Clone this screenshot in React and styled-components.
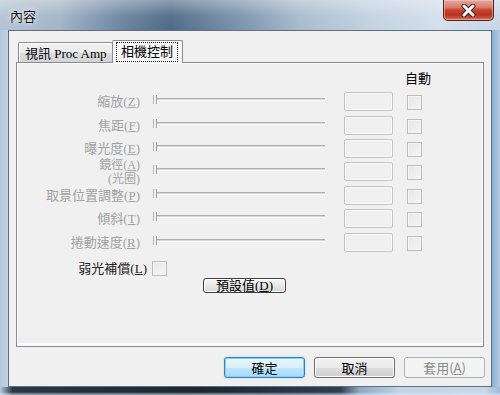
import React from 'react'
import styled, { createGlobalStyle } from 'styled-components'

const GlobalStyle = createGlobalStyle`
  html, body { margin: 0; padding: 0; background: #fff; }
  body {
    font-family: "Liberation Serif", "Noto Sans CJK TC", serif;
    font-size: 13px;
    color: #000;
  }
  * { box-sizing: border-box; }
`

const rows = [
  { label: '縮放', key: 'Z' },
  { label: '焦距', key: 'F' },
  { label: '曝光度', key: 'E' },
  { label: '鏡徑', key: 'A', extra: '(光圈)' },
  { label: '取景位置調整', key: 'P' },
  { label: '傾斜', key: 'T' },
  { label: '捲動速度', key: 'R' },
]

function App() {
  return (
    <>
      <GlobalStyle />
      <Window>
        <TitleBar>
          <Title>內容</Title>
          <CloseBtn>
            <svg width="15" height="13" viewBox="0 0 15 13">
              <path d="M3 2 L12 11 M12 2 L3 11" stroke="#3a2020" strokeWidth="5" strokeLinecap="round" />
              <path d="M3 2 L12 11 M12 2 L3 11" stroke="#fff" strokeWidth="3" strokeLinecap="round" />
            </svg>
          </CloseBtn>
        </TitleBar>
        <Client>
          <TabArea>
            <TabStrip>
              <Tab>視訊 Proc Amp</Tab>
              <Tab $active>
                <Focus>相機控制</Focus>
              </Tab>
            </TabStrip>
            <Panel>
              <HeaderRow>自動</HeaderRow>
              {rows.map((r) => (
                <Row key={r.key}>
                  <Label $twoLine={!!r.extra}>
                    <LabelLine>
                      {r.label}(<u>{r.key}</u>)
                    </LabelLine>
                    {r.extra && <LabelLine>{r.extra}</LabelLine>}
                  </Label>
                  <Slider>
                    <Thumb />
                    <Track />
                  </Slider>
                  <ValueBox />
                  <Check />
                </Row>
              ))}
              <LowRow>
                <LowLabel>
                  弱光補償(<u>L</u>)
                </LowLabel>
                <LowCheck />
              </LowRow>
              <DefaultRow>
                <OldButton>
                  預設值(<u>D</u>)
                </OldButton>
              </DefaultRow>
            </Panel>
          </TabArea>
          <ButtonRow>
            <Button $variant="default">確定</Button>
            <Button>取消</Button>
            <Button $variant="disabled">
              套用(<u>A</u>)
            </Button>
          </ButtonRow>
        </Client>
        <BottomEdge />
      </Window>
    </>
  )
}

export default App

const Window = styled.div`
  width: 500px;
  height: 395px;
  display: flex;
  flex-direction: column;
  overflow: hidden;
  background: linear-gradient(90deg, #b3c7dc 0%, #c4d5e6 2%, #c9d8e8 96%, #8fb0d6 98.5%, #b6cbe0 100%);
`

const TitleBar = styled.div`
  height: 30px;
  display: flex;
  justify-content: space-between;
  align-items: flex-start;
  padding: 0 6px 0 10px;
  background:
    linear-gradient(180deg, rgba(255, 255, 255, 0.35) 0px, rgba(255, 255, 255, 0.05) 16px, rgba(255, 255, 255, 0) 30px),
    linear-gradient(90deg, #b4c4d4 0%, #a2b4c6 12%, #6d86a0 24%, #4f6a88 34%, #7b93ab 48%, #a8bbcd 60%, #c3d2e1 74%, #d3dfea 88%, #c8d7e6 100%);
`

const Title = styled.div`
  margin-top: 8px;
  font-family: "Noto Sans CJK TC", sans-serif;
  font-size: 13px;
  line-height: 15px;
  color: #111;
  text-shadow: 0 0 6px rgba(255, 255, 255, 0.9), 0 0 2px rgba(255, 255, 255, 0.9);
`

const CloseBtn = styled.div`
  width: 51px;
  height: 21px;
  display: flex;
  align-items: center;
  justify-content: center;
  border: 1px solid #4a2424;
  border-top: none;
  border-radius: 0 0 5px 5px;
  background: linear-gradient(180deg, #e4a69c 0%, #d7816f 35%, #c7432f 50%, #b9311f 75%, #d8705a 100%);
  box-shadow: inset 0 0 0 1px rgba(255, 210, 200, 0.5);
`

const Client = styled.div`
  height: 357px;
  margin: 0 8px;
  border: 1px solid #5e6f81;
  background: #f0f0f0;
  display: flex;
  flex-direction: column;
  padding-top: 9px;
`

const TabArea = styled.div`
  margin: 0 7px;
  display: flex;
  flex-direction: column;
`

const TabStrip = styled.div`
  height: 22px;
  display: flex;
  align-items: flex-end;
  padding-left: 2px;
  position: relative;
  z-index: 1;
`

const Tab = styled.div`
  height: ${(p) => (p.$active ? '23px' : '20px')};
  width: ${(p) => (p.$active ? '71px' : '95px')};
  margin-left: ${(p) => (p.$active ? '-1px' : '0')};
  margin-bottom: ${(p) => (p.$active ? '-1px' : '0')};
  border: 1px solid #898c95;
  border-bottom: none;
  border-radius: 2px 2px 0 0;
  display: flex;
  align-items: center;
  padding-left: ${(p) => (p.$active ? '3px' : '6px')};
  font-size: 13px;
  white-space: nowrap;
  background: ${(p) =>
    p.$active
      ? '#f7f7f7'
      : 'linear-gradient(180deg, #f2f2f2 0%, #ebebeb 50%, #dddddd 51%, #d4d4d4 100%)'};
  box-shadow: inset 1px 1px 0 #fff;
`

const Focus = styled.span`
  border: 1px dotted #222;
  padding: 1px 4px 2px 4px;
  line-height: 15px;
`

const Panel = styled.div`
  height: 285px;
  border: 1px solid #898c95;
  background: #f0f0f0;
  box-shadow: inset 0 0 0 1px #fbfbfb, inset 0 -3px 0 #fbfbfb;
  display: flex;
  flex-direction: column;
`

const HeaderRow = styled.div`
  height: 25px;
  margin-top: 2px;
  padding-left: 388px;
  display: flex;
  align-items: center;
  font-family: "Noto Sans CJK TC", sans-serif;
  font-size: 13px;
`

const Row = styled.div`
  height: 23.4px;
  display: flex;
  align-items: center;
`

const Label = styled.div`
  width: 123px;
  display: flex;
  flex-direction: column;
  align-items: flex-end;
  color: #a2a2a2;
  font-size: ${(p) => (p.$twoLine ? '12px' : '13px')};
  line-height: ${(p) => (p.$twoLine ? '14px' : '15px')};
  white-space: nowrap;
  u { text-underline-offset: 1px; }
`

const LabelLine = styled.span`
  display: block;
`

const Slider = styled.div`
  width: 172px;
  margin-left: 13px;
  margin-bottom: 4px;
  display: flex;
  align-items: center;
`

const Thumb = styled.div`
  width: 4px;
  height: 9px;
  border-left: 1px solid #b5b5b5;
  border-right: 1px solid #a0a0a0;
`

const Track = styled.div`
  flex: 1;
  height: 3px;
  border-top: 1px solid #b0b0b0;
  border-bottom: 1px solid #fdfdfd;
  background: #d8d8d8;
`

const ValueBox = styled.div`
  width: 49px;
  height: 19px;
  margin-left: 19px;
  border: 1px solid #c4c4c4;
  border-radius: 2px;
  background: #f0f0f0;
  box-shadow: inset 0 0 0 1px #f9f9f9;
`

const Check = styled.div`
  width: 15px;
  height: 15px;
  margin-left: 14px;
  margin-top: 2px;
  border: 1px solid #bcbcbc;
  background: linear-gradient(135deg, #e6e6e6, #f6f6f6);
  box-shadow: inset 0 0 0 1px #f4f4f4;
`

const LowRow = styled.div`
  height: 18px;
  margin-top: 6px;
  display: flex;
  align-items: center;
`

const LowLabel = styled.div`
  width: 130px;
  text-align: right;
  color: #222;
  font-size: 13px;
  line-height: 15px;
  white-space: nowrap;
`

const LowCheck = styled(Check)`
  margin-left: 5px;
  margin-top: 0;
`

const DefaultRow = styled.div`
  display: flex;
  padding-left: 186px;
`

const OldButton = styled.div`
  width: 83px;
  height: 15px;
  border: 1px solid #3f3f3f;
  border-radius: 3px;
  display: flex;
  align-items: center;
  justify-content: center;
  font-size: 13px;
  line-height: 13px;
  background: linear-gradient(180deg, #f8f8f8 0%, #e8e8e8 50%, #d4d4d4 100%);
  box-shadow: inset 0 0 0 1px #fff;
`

const ButtonRow = styled.div`
  margin-top: 10px;
  display: flex;
  justify-content: flex-end;
  gap: 9px;
  padding-right: 6px;
`

const Button = styled.div`
  width: 81px;
  height: 21px;
  border-radius: 3px;
  display: flex;
  align-items: center;
  justify-content: center;
  font-family: "Noto Sans CJK TC", sans-serif;
  font-size: 13px;
  border: 1px solid
    ${(p) => (p.$variant === 'default' ? '#3c7fb1' : p.$variant === 'disabled' ? '#adb2b5' : '#707070')};
  color: ${(p) => (p.$variant === 'disabled' ? '#8a8a8a' : '#000')};
  background: ${(p) =>
    p.$variant === 'default'
      ? 'linear-gradient(180deg, #eaf6fd 0%, #d9f0fc 50%, #bee6fd 51%, #a7d9f5 100%)'
      : p.$variant === 'disabled'
      ? '#f4f4f4'
      : 'linear-gradient(180deg, #f2f2f2 0%, #ebebeb 50%, #dddddd 51%, #cfcfcf 100%)'};
  box-shadow: ${(p) =>
    p.$variant === 'default'
      ? 'inset 0 0 0 1px #7ed3f7, 0 0 2px #8fd1f5'
      : p.$variant === 'disabled'
      ? 'none'
      : 'inset 0 0 0 1px #fcfcfc'};
`

const BottomEdge = styled.div`
  height: 8px;
  background:
    linear-gradient(180deg, rgba(0, 0, 0, 0) 0px, rgba(0, 0, 0, 0) 1px, rgba(255, 255, 255, 0) 5px, rgba(220, 232, 245, 0.7) 8px),
    linear-gradient(90deg, #b6cbe0 0%, #2a3746 2.5%, #1c2632 40%, #2f3f52 68%, #8fa9c4 72%, #c3d4e5 80%, #c7d7e7 97%, #9db9d8 100%);
`
